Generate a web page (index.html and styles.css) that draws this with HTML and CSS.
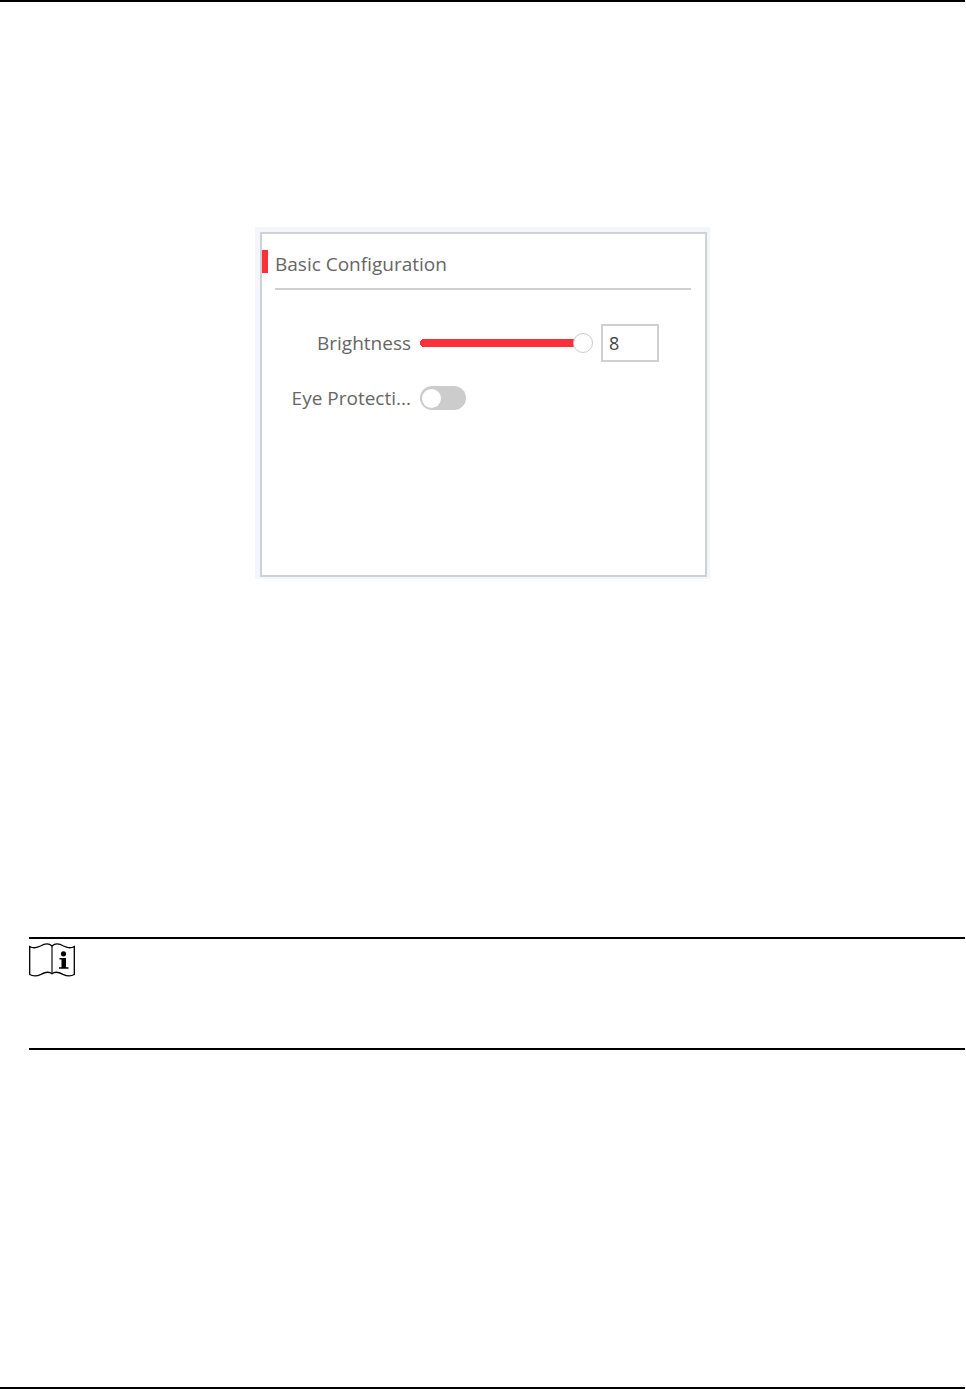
FILE: index.html
```html
<!DOCTYPE html>
<html lang="en">
<head>
<meta charset="utf-8">
<meta name="viewport" content="width=device-width, initial-scale=1">
<title>Basic Configuration</title>
<link rel="stylesheet" href="styles.css">
</head>
<body>
<main class="page">
  <figure class="frame">
    <section class="panel">
      <h1 class="panel-title">Basic Configuration</h1>
      <form class="settings">
        <label class="label" for="brightness">Brightness</label>
        <div class="control">
          <input class="slider" id="brightness" type="range" min="0" max="8" value="8">
          <input class="number" type="text" value="8" aria-label="Brightness value">
        </div>
        <label class="label" for="eye">Eye Protecti...</label>
        <div class="control">
          <input class="toggle" id="eye" type="checkbox" role="switch">
        </div>
      </form>
    </section>
  </figure>
  <aside class="note" aria-label="Note">
    <svg class="note-icon" width="46" height="34" viewBox="0 0 46 34" aria-hidden="true">
      <path d="M.7 3.5C5 5.800 8 4.500 11.500 3C16 .4 20 .2 23 3C26 .2 30 .4 34.500 3C38 4.500 41 5.800 45.300 3.500V31.500C41 34 37.500 33 34 31.300C30 29.200 26 28.200 23 30.800C20 28.200 16 29.200 12 31.300C8.500 33 5 34 .7 31.500Z" fill="#fff" stroke="#000" stroke-width="1.300"/>
      <path d="M23 3V31" stroke="#222" stroke-width="1.300"/>
      <circle cx="34.500" cy="10.800" r="2.600"/>
      <path d="M30.500 15H37V24.300H39.500V25.800H30V24.300H32.500V16.500H30.500Z"/>
    </svg>
  </aside>
</main>
</body>
</html>
```
FILE: styles.css
```css
* {
  box-sizing: border-box;
}

body {
  margin: 0;
  background: #fff;
  color: #666;
  font: 19px/26px "Open Sans", "Noto Sans", sans-serif;
}

.page {
  min-height: 100vh;
  margin-right: 1px;
  padding-top: 225px;
  border-top: 2px solid #000;
  border-bottom: 2px solid #000;
}

.frame {
  max-width: 455px;
  margin: 0 auto;
  padding: 5px 3px 2px 5px;
  background: #f5f6fb;
}

.panel {
  min-height: 345px;
  padding: 17px 14px 16px 0;
  border: 2px solid #d0d1d3;
  background: #fff;
}

.panel-title {
  position: relative;
  margin: 0 0 0 13px;
  padding-bottom: 11px;
  border-bottom: 2px solid #d0d0d0;
  font-size: 19px;
  font-weight: 400;
}

.panel-title::before {
  content: "";
  position: absolute;
  top: -1px;
  left: -13px;
  width: 6px;
  height: 23px;
  background: #fb3038;
}

.settings {
  display: grid;
  grid-template-columns: 149px 1fr;
  column-gap: 9px;
  row-gap: 23px;
  align-items: center;
  margin-top: 34px;
}

.label {
  text-align: right;
  white-space: nowrap;
}

.control {
  display: flex;
  align-items: center;
  gap: 8px;
}

.slider {
  appearance: none;
  width: 173px;
  height: 20px;
  margin: 0;
  background: transparent;
}

/* The bar stops under the centre of the thumb. */
.slider::-webkit-slider-runnable-track {
  height: 20px;
  background:
    radial-gradient(circle at 4px 10px, #fb3038 4px, transparent 4px) 0 0 / 4px 20px no-repeat,
    linear-gradient(#fb3038, #fb3038) 4px 6px / calc(100% - 14px) 8px no-repeat;
}

.slider::-webkit-slider-thumb {
  appearance: none;
  width: 20px;
  height: 20px;
  border: 1px solid #ccc;
  border-radius: 50%;
  background: #fff;
}

.number {
  width: 58px;
  height: 38px;
  padding: 0 6px;
  border: 2px solid #d0d0d0;
  background: #fff;
  color: #444;
  font: inherit;
  font-size: 18px;
}

.toggle {
  appearance: none;
  display: flex;
  align-items: center;
  width: 46px;
  height: 24px;
  margin: 0;
  padding: 0 2px;
  border-radius: 12px;
  background: #ccc;
}

.toggle::before {
  content: "";
  width: 19px;
  height: 19px;
  border-radius: 50%;
  background: #fff;
}

.toggle:checked {
  justify-content: flex-end;
  background: #fb3038;
}

.note {
  min-height: 113px;
  margin: 358px 0 0 29px;
  padding-top: 4px;
  border-top: 2px solid #000;
  border-bottom: 2px solid #000;
}

.note-icon {
  display: block;
}
```
